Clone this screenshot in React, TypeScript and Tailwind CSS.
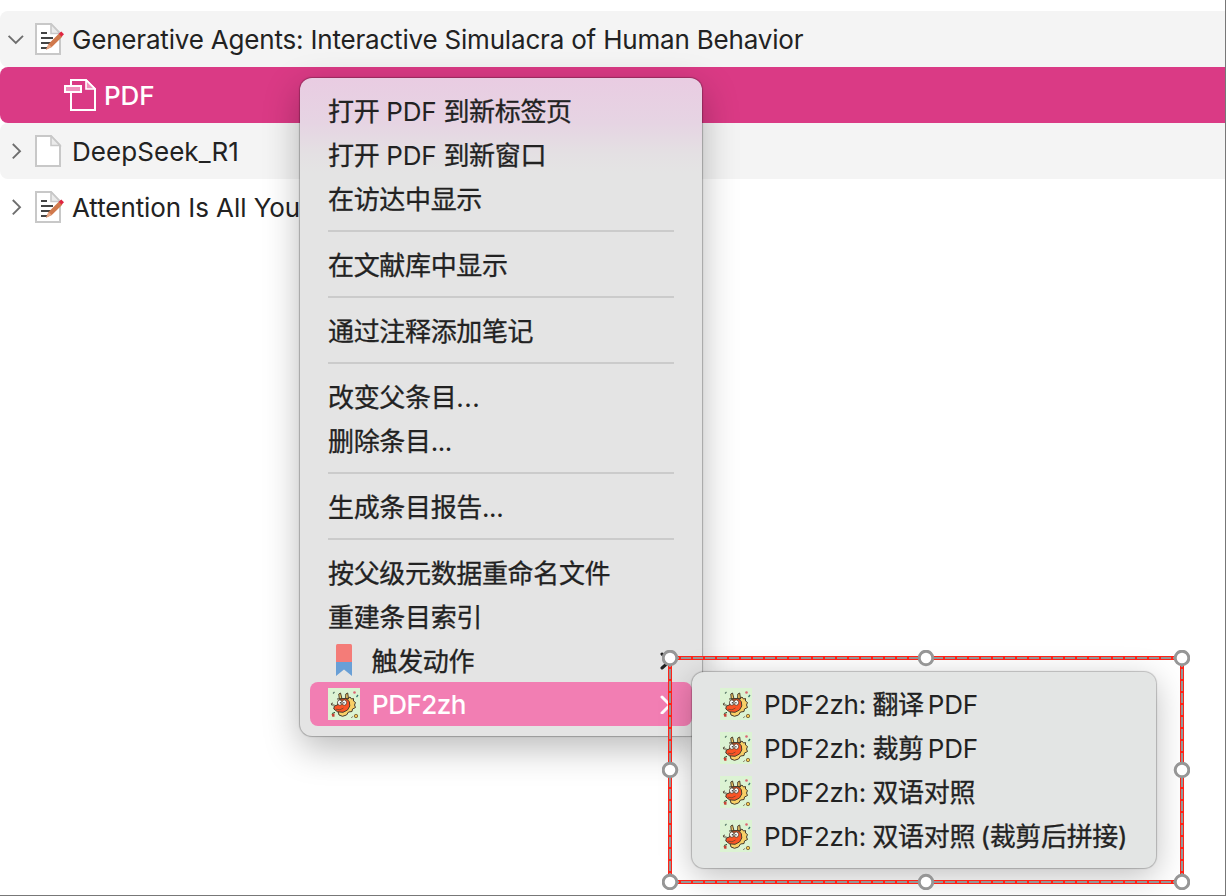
import React from "react";

function Chevron({ open = false }: { open?: boolean }) {
  return (
    <svg width="18" height="18" viewBox="0 0 18 18" className={open ? "rotate-90" : ""} fill="none" stroke="#6e6e6e" strokeWidth="1.9">
      <path d="M5.8 2 13 9.2 5.8 16.4" />
    </svg>
  );
}

function PageIcon({ article = false }: { article?: boolean }) {
  return (
    <svg width="32" height="32" viewBox="0 0 32 32" fill="none" className="shrink-0">
      <path d="M3 1H18L27 10.5V31H3Z" fill="#fff" stroke="#c8c8c8" strokeWidth="2" />
      <path d="M18 1V10.5H27Z" fill="#ebebeb" stroke="#c8c8c8" strokeWidth="1.6" />
      {article && (
        <>
          <path d="M8 10H14M8 15H20M8 20H18M8 25H14" stroke="#444" strokeWidth="2" />
          <path d="M13 26.8 15.5 21 26 10.5 29.3 13.7 18.8 24Z" fill="#d0794c" />
          <path d="M13 26.8 15.5 21 18.8 24Z" fill="#e6a583" />
          <path d="M25.7 10.8 28.3 8.5 31 11.2 28.6 13.7Z" fill="#df2440" />
        </>
      )}
    </svg>
  );
}

function PdfIcon() {
  return (
    <svg width="32" height="32" viewBox="0 0 32 32" fill="none" stroke="#fff" strokeWidth="2">
      <path d="M7 6V1H22L31 10V31H7V14" />
      <path d="M22 1V10H31Z" fill="#f091bd" strokeWidth="1.6" />
      <rect x="1" y="7" width="16" height="6" fill="#f091bd" />
    </svg>
  );
}

function DragonIcon() {
  return (
    <svg width="32" height="32" viewBox="0 0 32 32" className="shrink-0">
      <rect width="32" height="32" fill="#dcf3d3" />
      <g stroke="#4a3d2c" strokeWidth="1" strokeLinejoin="round">
        <path d="M19 11 22 9 23.5 11 25.5 10.5 25.5 13 27.5 14.5 26.5 17 27.5 19.5 24.5 21 24 23.5 20.5 24 18.5 27 14.5 28.3 11 27 10 23Z" fill="#f8d067" />
        <path d="M11.3 11 10.8 6 12.5 5 14 11ZM17.6 11 17.8 6 19.7 5 20.5 11Z" fill="#f8d067" />
        <path d="M10 14 12.5 11 18 10.6 21.3 13.5 21.8 18 19.5 22 15 24.3 9.5 23.8 5.8 21 6.3 18 9.5 17Z" fill="#fa5426" />
        <path d="M8 21.2 12 21.8 15.5 20" fill="none" strokeWidth=".6" />
        <path d="M6.5 17 3.6 17 3.4 15.5 5 15" fill="none" strokeWidth=".9" />
        <path d="M9 11 20.5 10.3" strokeWidth="1" />
        <ellipse cx="11.8" cy="14.6" rx="2.3" ry="2.7" fill="#fff" strokeWidth=".8" />
        <ellipse cx="16.3" cy="14.6" rx="2.3" ry="2.7" fill="#fff" strokeWidth=".8" />
      </g>
      <path d="M11.8 14h1v1.5h-1ZM15.4 14h1v1.5h-1Z" fill="#222" />
      <path d="m5 5.5 1.5-1.5" stroke="#557565" strokeWidth="1.1" />
      <circle cx="26.5" cy="4.5" r="1.3" fill="#db6673" />
      <path d="m28.5 9 1.5-2" stroke="#38776e" strokeWidth="1.3" />
      <path d="m3.5 26 3-.8v3.5H4.3Z" fill="#c64336" />
      <path d="m4 25.5 3-1.2" stroke="#32643b" />
      <circle cx="28" cy="28" r="1.7" fill="#f7c950" stroke="#6c5530" strokeWidth=".8" />
      <path d="m23.3 30 1.5-1.7" stroke="#81705b" />
    </svg>
  );
}

function BookmarkIcon() {
  return (
    <svg width="32" height="32" viewBox="0 0 32 32" className="shrink-0">
      <path d="M8 18V1.5Q8 0 9.5 0H22.5Q24 0 24 1.5V18Z" fill="#f47c78" />
      <path d="M8 18H24V32L16 25.5 8 32Z" fill="#699fd6" />
    </svg>
  );
}

function Cjk({ children }: { children: React.ReactNode }) {
  return <span className="tracking-[-0.34px] [-webkit-text-stroke:0.3px]">{children}</span>;
}

function Item({ children }: { children: React.ReactNode }) {
  return <div className="flex h-11 items-center whitespace-pre px-7 pt-[3px]">{children}</div>;
}

function Separator() {
  return (
    <div className="flex h-[22px] items-center px-7">
      <div className="h-0.5 w-full bg-[#cbcbcb]" />
    </div>
  );
}

function SubItem({ label, latin, tail }: { label: string; latin?: string; tail?: string }) {
  return (
    <div className="flex h-11 items-center whitespace-pre pl-7">
      <DragonIcon />
      <div className="ml-3 flex pt-0.5">
        <span className="tracking-[-0.27px]">PDF2zh:</span>
        <span className="ml-[6.5px] tracking-[-0.34px] [-webkit-text-stroke:0.3px]">{label}</span>
        {latin && <span className="ml-1 tracking-[-0.2px]">{latin}</span>}
        {tail && <span className="ml-[5.5px] tracking-[-0.34px] [-webkit-text-stroke:0.3px]">{tail}</span>}
      </div>
    </div>
  );
}

const handles = [
  [8, 8], [264, 8], [520, 8], [8, 120], [520, 120], [8, 232], [264, 232], [520, 232],
];

export default function App() {
  return (
    <div className="relative h-[896px] w-[1226px] overflow-hidden border-r border-b border-[#777] bg-white pt-[11px] font-['Inter','Noto_Sans_CJK_SC',sans-serif] text-[26px] leading-[44px] text-[#222]">
      <div className="flex h-14 items-center rounded-l-lg bg-[#f4f4f4] pl-[7px]">
        <Chevron open />
        <div className="ml-2"><PageIcon article /></div>
        <span className="ml-[7px] pt-0.5 whitespace-nowrap tracking-[-0.19px]">Generative Agents: Interactive Simulacra of Human Behavior</span>
      </div>
      <div className="flex h-14 items-center rounded-l-lg bg-[#da3a85] pl-16 text-white">
        <PdfIcon />
        <span className="ml-2 pt-0.5 font-medium tracking-[-0.1px]">PDF</span>
      </div>
      <div className="flex h-14 items-center rounded-l-lg bg-[#f4f4f4] pl-[7px]">
        <Chevron />
        <div className="ml-2"><PageIcon /></div>
        <span className="ml-[7px] pt-0.5 tracking-[0.05px]">DeepSeek_R1</span>
      </div>
      <div className="flex h-14 items-center pl-[7px]">
        <Chevron />
        <div className="ml-2"><PageIcon article /></div>
        <span className="ml-[7px] pt-0.5 whitespace-nowrap tracking-[-0.08px]">Attention Is All You</span>
      </div>

      <div className="absolute top-[78px] left-[300px] h-[658px] w-[402px] rounded-xl bg-[#e4e4e4] bg-[linear-gradient(180deg,#e9cce2_0px,#e6d4e3_45px,#e4e0e3_75px,#e4e4e4_95px)] pt-2.5 shadow-[0_0_1px_1px_rgba(0,0,0,0.25),0_12px_36px_rgba(0,0,0,0.28)]">
        <Item><Cjk>打开</Cjk><span className="mx-[7px] tracking-[-0.2px]">PDF</span><Cjk>到新标签页</Cjk></Item>
        <Item><Cjk>打开</Cjk><span className="mx-[7px] tracking-[-0.2px]">PDF</span><Cjk>到新窗口</Cjk></Item>
        <Item><Cjk>在访达中显示</Cjk></Item>
        <Separator />
        <Item><Cjk>在文献库中显示</Cjk></Item>
        <Separator />
        <Item><Cjk>通过注释添加笔记</Cjk></Item>
        <Separator />
        <Item><Cjk>改变父条目</Cjk><span className="tracking-[0.5px]">...</span></Item>
        <Item><Cjk>删除条目</Cjk><span className="tracking-[-0.4px]">...</span></Item>
        <Separator />
        <Item><Cjk>生成条目报告</Cjk><span className="tracking-[-0.4px]">...</span></Item>
        <Separator />
        <Item><Cjk>按父级元数据重命名文件</Cjk></Item>
        <Item><Cjk>重建条目索引</Cjk></Item>
        <div className="flex h-11 items-center pl-7 pr-[30px]">
          <BookmarkIcon />
          <span className="ml-[11.5px] flex-1 pt-[3px] tracking-[-0.34px] [-webkit-text-stroke:0.3px]">触发动作</span>
          <svg width="12" height="20" viewBox="0 0 12 20" fill="none" stroke="#222" strokeWidth="3" strokeLinecap="round"><path d="m2 4 8 7-8 7" /></svg>
        </div>
        <div className="mx-2.5 flex h-11 items-center rounded-lg bg-[#f27eb3] pl-[18px] pr-5 text-white">
          <DragonIcon />
          <span className="ml-3 flex-1 pt-0.5 font-medium tracking-[-0.5px]">PDF2zh</span>
          <svg width="12" height="20" viewBox="0 0 12 20" fill="none" stroke="#fff" strokeWidth="3" strokeLinecap="round"><path d="m2 3 8 8-8 8" /></svg>
        </div>
      </div>

      <div className="absolute top-[672px] left-[692px] h-[196px] w-[464px] rounded-xl bg-[#e3e5e4] pt-2.5 shadow-[0_0_1px_1px_rgba(0,0,0,0.22),0_8px_32px_rgba(0,0,0,0.25)]">
        <SubItem label="翻译" latin="PDF" />
        <SubItem label="裁剪" latin="PDF" />
        <SubItem label="双语对照" />
        <SubItem label="双语对照" tail="(裁剪后拼接)" />
      </div>

      <svg width="528" height="240" viewBox="0 0 528 240" className="absolute top-[650px] left-[662px]" fill="none">
        <rect x="8" y="8" width="512" height="224" stroke="#ff2318" strokeWidth="4" />
        <path d="M8 8H520M8 232H520M8 8V232M520 8V232" stroke="#969696" strokeWidth="2" strokeDasharray="10 2" strokeDashoffset="1" />
        {handles.map(([x, y]) => (
          <circle key={`${x}-${y}`} cx={x} cy={y} r="6.8" fill="#fff" stroke="#969696" strokeWidth="3" />
        ))}
      </svg>
    </div>
  );
}
